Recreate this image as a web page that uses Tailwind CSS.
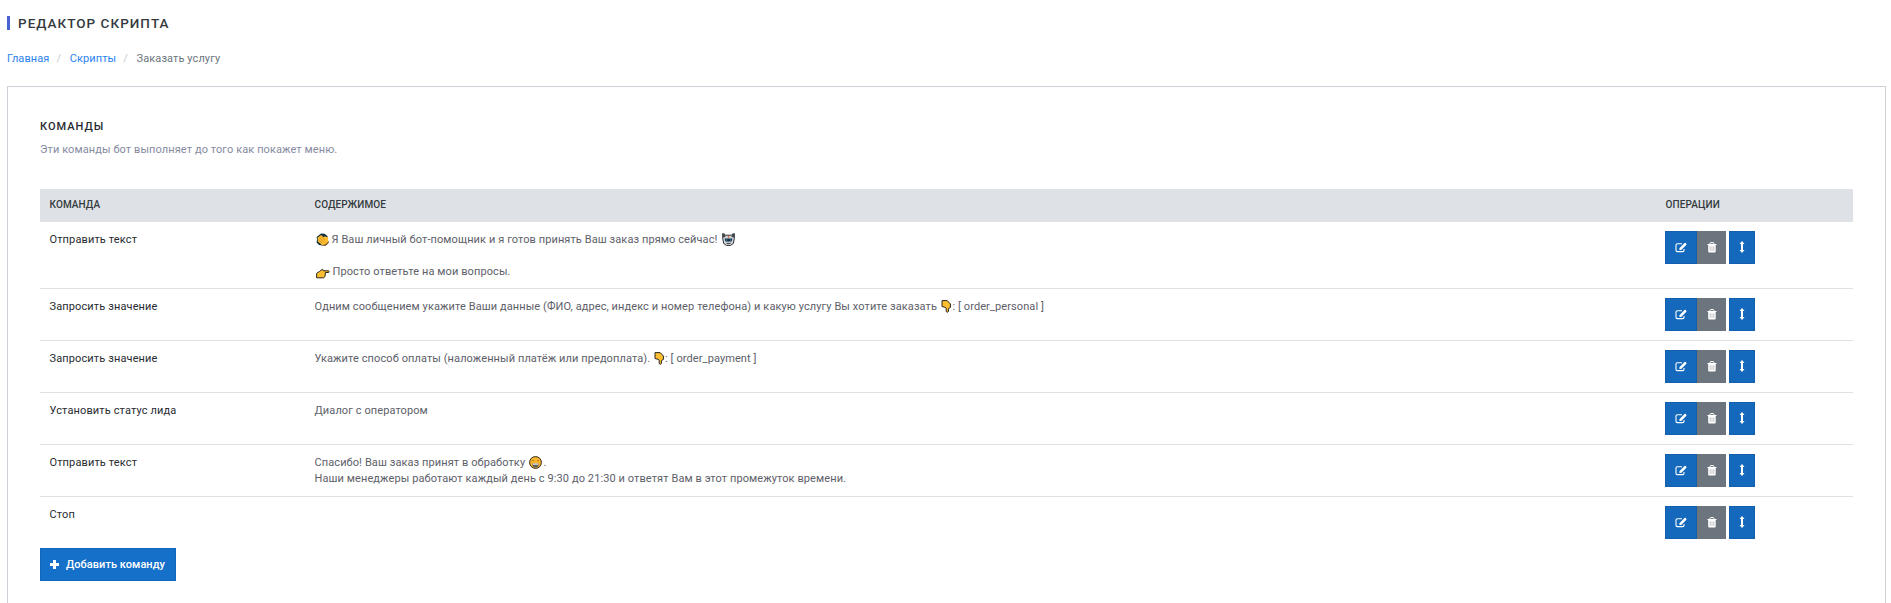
<!DOCTYPE html>
<html lang="ru">
<head>
<meta charset="utf-8">
<title>Редактор скрипта</title>
<script src="https://cdn.jsdelivr.net/npm/@tailwindcss/browser@4"></script>
</head>
<body class="bg-white font-['Roboto',sans-serif] text-[11px] leading-4 tracking-[0.095px] text-[#5d6069]">
<svg class="hidden">
  <symbol id="edit" viewBox="0 0 12 11">
    <path d="M7 1.7H2.3Q1 1.7 1 3V8.3Q1 9.6 2.3 9.6H7.8Q9 9.6 9 8.3V7" fill="none" stroke="#fff" stroke-width="1.1"/>
    <path d="M4.4 6.2 9.5 1.1Q10.1.5 10.7 1.1L11.3 1.7Q11.8 2.3 11.2 2.9L6.2 7.9H4.4Z" fill="#fff"/>
  </symbol>
  <symbol id="trash" viewBox="0 0 10 11">
    <path d="M3 2V1.2Q3 .6 3.6.6H6.2Q6.9.6 6.9 1.2V2" fill="none" stroke="#fff"/>
    <path d="M.4 1.9H9.5V3H8.7V9.5Q8.7 10.6 7.7 10.6H2.2Q1.2 10.6 1.2 9.5V3H.4Z" fill="#fff"/>
    <path d="M3.2 4.2V9M5 4.2V9M6.8 4.2V9" stroke="#6c757d" stroke-width=".4"/>
  </symbol>
  <symbol id="move" viewBox="0 0 6 12"><path d="M3 0 5.5 3H4V9H5.5L3 12 .5 9H2V3H.5Z" fill="#fff"/></symbol>
  <symbol id="clap" viewBox="0 0 13 13">
    <path d="M5 .5 8.5.8 11.5 3V8L10.5 11.5 6.5 12.6 3 12 .6 9.5 1 6 .6 4Z" fill="#132f42"/>
    <path d="M1.6 4.5 5.2 1.9 7.8 4.3 9 3.2 11.9 4.6 12.4 9 9.5 12.3 6 12 1.8 8.6Z" fill="#fdbb2d"/>
    <path d="M3.3 4.4 7.4 8.8M5.2 3 8.8 7.2M2.6 6.7 6.3 10.4" stroke="#a8741a" stroke-width=".5"/>
    <path d="M10.8 10.6 12.6 7.8V10L9.8 12.8H6Z" fill="#6b4b1c"/>
  </symbol>
  <symbol id="right" viewBox="0 0 14 11">
    <path d="M.6 5.4 3.8 3.2 6.6 1.2 7.4 2.8H12.7Q13.6 3.6 12.7 4.5H9.4L9 8.6 7.5 9.8H.6Z" fill="#fdbf30" stroke="#292720" stroke-width="1"/>
  </symbol>
  <symbol id="down" viewBox="0 0 10 13">
    <path d="M1 .6H6.2L9.4 4V7.5L7.4 8.5V11.6Q6.5 12.8 5.2 11.6V8.2L4 7.3 1 6.5Z" fill="#fdbf30" stroke="#292720" stroke-width="1"/>
  </symbol>
  <symbol id="cat" viewBox="0 0 13 13">
    <path d="M.7.7 3.5 2.2H9.5L12.3.7V5.5L11.3 10.5 8.5 12.4H4.5L1.7 10.5.7 5.5Z" fill="#d3d6da" stroke="#292d34" stroke-width="1"/>
    <path d="M.5.5H2.5L3.5 4 1 4.5ZM12.5.5H10.5L9.5 4 12 4.5Z" fill="#43474e"/>
    <path d="M2.6 5.6H10.4L9.6 8.6H3.4Z" fill="#14293c"/>
    <path d="M3.8 6.4H5.2V7.4H3.8ZM7.8 6.4H9.2V7.4H7.8Z" fill="#33bde8"/>
    <path d="M5.8 2.7H7.2V4.8H5.8Z" fill="#d9684b"/>
    <path d="M4.5 10.3H8.5" stroke="#353a41"/>
  </symbol>
  <symbol id="grin" viewBox="0 0 13 13">
    <circle cx="6.5" cy="6.5" r="5.9" fill="#f9b52b" stroke="#30281c" stroke-width="1"/>
    <path d="M3.2 4.7H5M8 4.7H9.8" stroke="#a8741a" stroke-width="1"/>
    <path d="M3.3 7.4H9.7V9Q9 11.6 6.5 11.6 4 11.6 3.3 9Z" fill="#5d5f63"/>
    <path d="M3.7 7.4H9.3V8.8H3.7Z" fill="#e3e2dd"/>
  </symbol>
</svg>

<div class="flex h-[603px] flex-col overflow-hidden pl-[7px] pr-[5px] pt-4">
  <header class="flex h-4 items-start gap-2">
    <span class="h-3.5 w-[3px] bg-[#4862cf]"></span>
    <h1 class="-mt-px text-[13.5px] leading-4 font-medium tracking-[1.02px] text-[#343a40] uppercase">Редактор скрипта</h1>
  </header>
  <nav class="mt-[19px] flex h-4">
    <a class="text-[#2b82ee]">Главная</a><span class="ml-[7px] w-[13.3px] text-[#c6ccd3]">/</span>
    <a class="text-[#2b82ee]">Скрипты</a><span class="ml-[7px] w-[13.3px] text-[#c6ccd3]">/</span>
    <span class="text-[#6c757d]">Заказать услугу</span>
  </nav>

  <main class="mt-[19px] flex-1 border border-b-0 border-[#ced2d8] pt-8 pr-8 pl-8">
    <h2 class="font-medium tracking-[1px] text-[#272b30] uppercase">Команды</h2>
    <p class="mt-[7px] text-[#868ba1]">Эти команды бот выполняет до того как покажет меню.</p>

    <div class="mt-[31px] grid h-[33px] grid-cols-[265px_1351px_1fr] bg-[#dee2e6] pt-2 pl-[9.5px] text-[10px] font-medium tracking-[0.1px] text-[#343a40] uppercase">
      <span>Команда</span><span>Содержимое</span><span>Операции</span>
    </div>
    <div id="rows">
      <div class="grid h-[66px] grid-cols-[265px_1350.5px_1fr] pt-[10px] pl-[9.5px]">
        <span class="tracking-[0.13px] text-[#272b30]">Отправить текст</span>
        <div>
          <p><svg class="mr-[3px] ml-px inline h-[13px] w-[13px] align-[-3px]"><use href="#clap"/></svg><span>Я Ваш личный бот-помощник и я готов принять Ваш заказ прямо сейчас! </span><svg class="ml-[1.5px] inline h-[13px] w-[13px] align-[-3px]"><use href="#cat"/></svg></p>
          <p class="mt-4"><svg class="mr-[3px] ml-px inline h-[11px] w-[14px] align-[-4px]"><use href="#right"/></svg><span>Просто ответьте на мои вопросы.</span></p>
        </div>
      </div>
      <div class="grid h-[52px] grid-cols-[265px_1350.5px_1fr] border-t border-[#dee2e6] pt-[10px] pl-[9.5px]">
        <span class="tracking-[0.13px] text-[#272b30]">Запросить значение</span>
        <p>Одним сообщением укажите Ваши данные (ФИО, адрес, индекс и номер телефона) и какую услугу Вы хотите заказать <svg class="mr-[1.5px] ml-px inline h-[13px] w-[10px] align-[-3px]"><use href="#down"/></svg>: [ order_personal ]</p>
      </div>
      <div class="grid h-[52px] grid-cols-[265px_1350.5px_1fr] border-t border-[#dee2e6] pt-[10px] pl-[9.5px]">
        <span class="tracking-[0.13px] text-[#272b30]">Запросить значение</span>
        <p>Укажите способ оплаты (наложенный платёж или предоплата). <svg class="mr-px ml-px inline h-[13px] w-[10px] align-[-3px]"><use href="#down"/></svg>: [ order_payment ]</p>
      </div>
      <div class="grid h-[52px] grid-cols-[265px_1350.5px_1fr] border-t border-[#dee2e6] pt-[10px] pl-[9.5px]">
        <span class="tracking-[0.13px] text-[#272b30]">Установить статус лида</span>
        <p>Диалог с оператором</p>
      </div>
      <div class="grid h-[52px] grid-cols-[265px_1350.5px_1fr] border-t border-[#dee2e6] pt-[10px] pl-[9.5px]">
        <span class="tracking-[0.13px] text-[#272b30]">Отправить текст</span>
        <p>Спасибо! Ваш заказ принят в обработку <svg class="mr-[1.5px] ml-px inline h-[13px] w-[13px] align-[-3px]"><use href="#grin"/></svg>.<br>Наши менеджеры работают каждый день с 9:30 до 21:30 и ответят Вам в этот промежуток времени.</p>
      </div>
      <div class="grid h-[52px] grid-cols-[265px_1350.5px_1fr] border-t border-[#dee2e6] pt-[10px] pl-[9.5px]">
        <span class="tracking-[0.13px] text-[#272b30]">Стоп</span>
        <p></p>
      </div>
    </div>
    <button class="flex h-[33px] w-[136px] items-center border border-[#1368bb] bg-[#1570c9] pl-[9px] font-medium tracking-[0.05px] text-white">
      <svg class="mr-[7px] h-[9px] w-[9px]" viewBox="0 0 9 9"><path d="M3 0H6V3H9V6H6V9H3V6H0V3H3Z" fill="#fff"/></svg>Добавить команду
    </button>
  </main>
</div>

<template id="ops">
  <div class="-mt-px flex h-[33px]">
    <button class="flex w-8 items-center justify-center border border-[#135fae] bg-[#1569bd]"><svg class="-mt-px h-[11px] w-3"><use href="#edit"/></svg></button>
    <button class="flex w-[29px] items-center justify-center bg-[#6c757d]"><svg class="-mt-px h-[11px] w-[10px]"><use href="#trash"/></svg></button>
    <button class="ml-[3px] flex w-[26px] items-center justify-center border border-[#135fae] bg-[#1569bd]"><svg class="-mt-px h-3 w-1.5"><use href="#move"/></svg></button>
  </div>
</template>
<script>
  const ops = document.getElementById('ops');
  for (const row of document.getElementById('rows').children) row.append(ops.content.cloneNode(true));
</script>
</body>
</html>
